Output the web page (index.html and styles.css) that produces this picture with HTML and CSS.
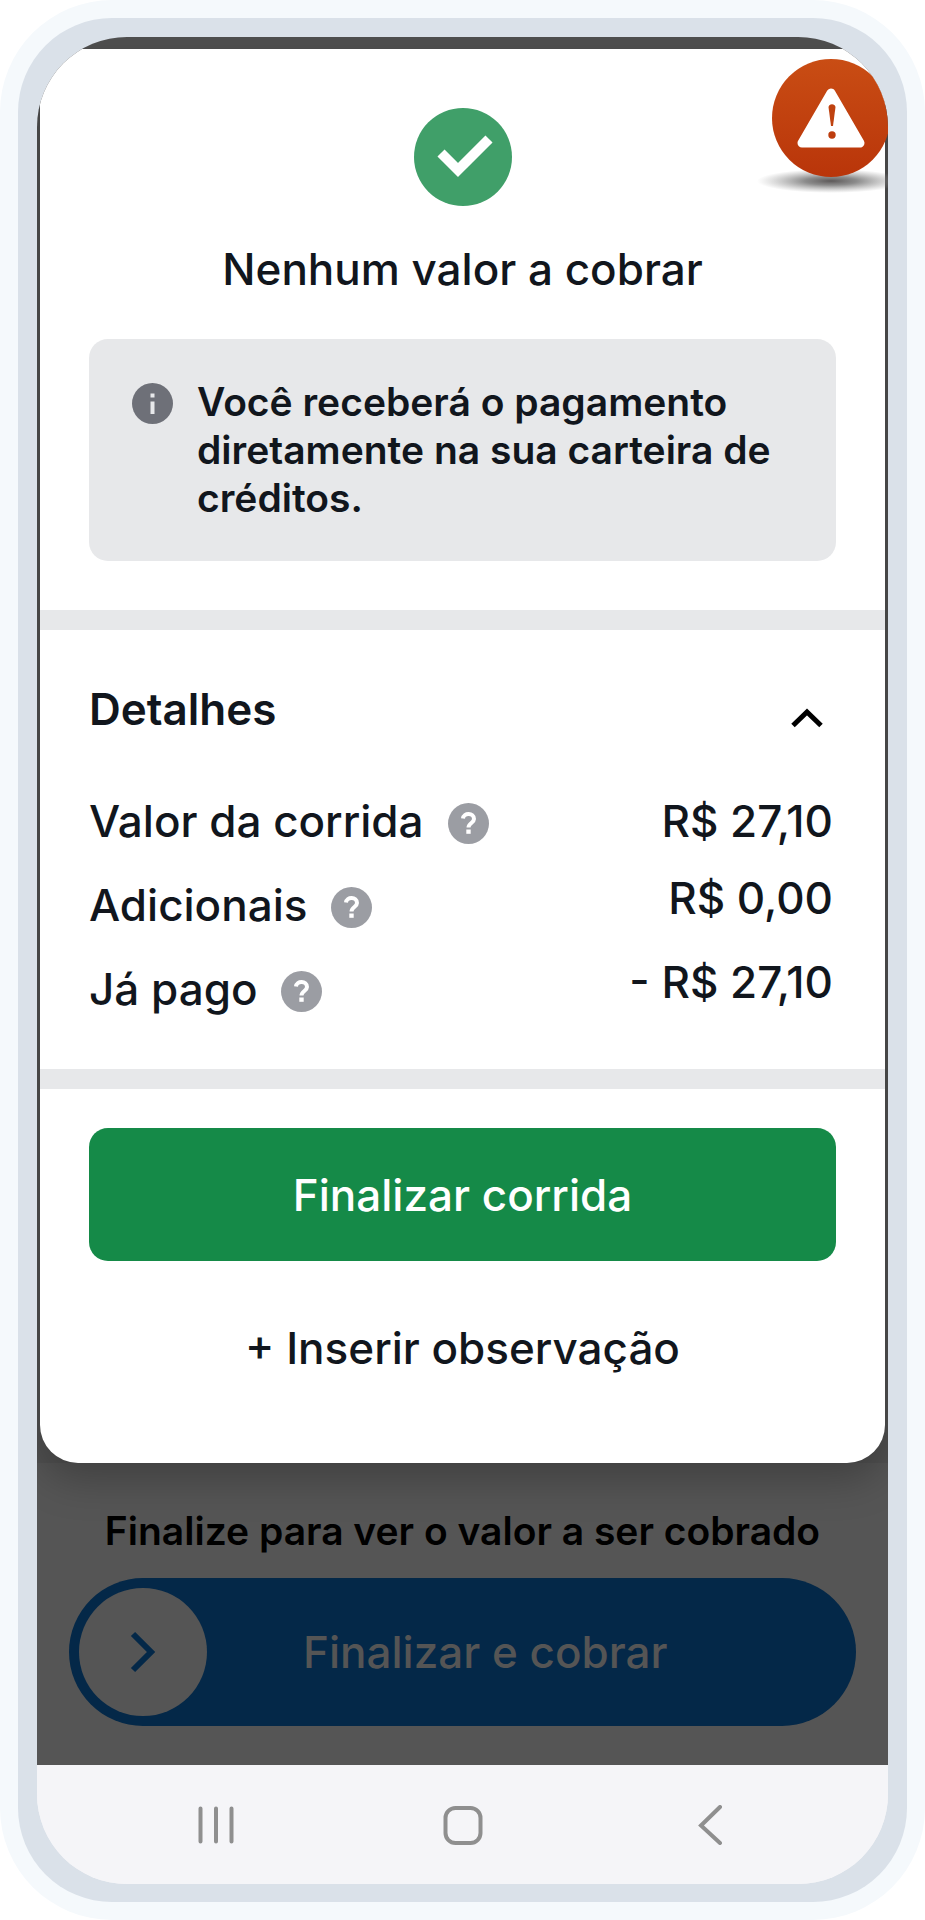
FILE: index.html
```
<!DOCTYPE html>
<html lang="pt-BR">
<head>
    <meta charset="UTF-8">
    <meta name="viewport" content="width=device-width, initial-scale=1">
    <title>Finalizar corrida</title>
    <link rel="stylesheet" href="styles.css">
</head>
<body>
<div class="phone">
    <div class="phone-frame">
        <div class="screen">
            <button class="alert" type="button" aria-label="Alerta">
                <svg viewBox="0 0 150 136" width="150" height="136">
                    <defs>
                        <linearGradient id="alert-fill" x1="0" y1="0" x2="0" y2="1">
                            <stop offset="0" stop-color="#c94d14"/>
                            <stop offset="1" stop-color="#b9350a"/>
                        </linearGradient>
                        <radialGradient id="alert-shadow">
                            <stop offset="0" stop-color="#5c5858"/>
                            <stop offset="0.35" stop-color="#777" stop-opacity="0.85"/>
                            <stop offset="1" stop-color="#999" stop-opacity="0"/>
                        </radialGradient>
                    </defs>
                    <ellipse cx="75" cy="122" rx="74" ry="12" fill="url(#alert-shadow)"/>
                    <circle cx="75" cy="59" r="59" fill="url(#alert-fill)"/>
                    <path d="M75 34 L104 84 H46 Z" fill="#fff" stroke="#fff" stroke-width="9" stroke-linejoin="round"/>
                    <path d="M72.500 48 a3.600 3.600 0 0 1 7 0 L77 67 H75 Z" fill="#bf4210"/>
                    <circle cx="76" cy="76" r="3.700" fill="#bd3d0e"/>
                </svg>
            </button>

            <main class="sheet">
                <section class="summary">
                    <svg class="check" viewBox="0 0 98 98" width="98" height="98">
                        <circle cx="49" cy="49" r="49" fill="#409f69"/>
                        <path d="M27 45 L44 62 L75 31" fill="none" stroke="#fff" stroke-width="10"/>
                    </svg>
                    <h1>Nenhum valor a cobrar</h1>
                    <div class="info">
                        <svg class="info-icon" viewBox="0 0 41 41" width="41" height="41">
                            <circle cx="20.5" cy="20.5" r="20.5" fill="#6e7078"/>
                            <path d="M18.500 10.500h4v4h-4z M18.500 18.500h4v12.500h-4z" fill="#e7e8ea"/>
                        </svg>
                        <p>Você receberá o pagamento diretamente na sua carteira de créditos.</p>
                    </div>
                </section>

                <section class="details">
                    <div class="details-head">
                        <h2>Detalhes</h2>
                        <button class="toggle" type="button" aria-label="Recolher detalhes">
                            <svg viewBox="0 0 32 20" width="32" height="20">
                                <path d="M2 17.500 L16 4 L30 17.500" fill="none" stroke="#000" stroke-width="5"/>
                            </svg>
                        </button>
                    </div>
                    <dl class="values">
                        <div class="row">
                            <dt>Valor da corrida
                                <button class="help" type="button" aria-label="Ajuda: valor da corrida">
                                    <svg viewBox="0 0 41 41" width="41" height="41"><use href="#help-icon"/></svg>
                                </button>
                            </dt>
                            <dd>R$ 27,10</dd>
                        </div>
                        <div class="row">
                            <dt>Adicionais
                                <button class="help" type="button" aria-label="Ajuda: adicionais">
                                    <svg viewBox="0 0 41 41" width="41" height="41"><use href="#help-icon"/></svg>
                                </button>
                            </dt>
                            <dd>R$ 0,00</dd>
                        </div>
                        <div class="row">
                            <dt>Já pago
                                <button class="help" type="button" aria-label="Ajuda: já pago">
                                    <svg viewBox="0 0 41 41" width="41" height="41"><use href="#help-icon"/></svg>
                                </button>
                            </dt>
                            <dd>- R$ 27,10</dd>
                        </div>
                    </dl>
                </section>

                <section class="actions">
                    <button class="btn-finish" type="button">Finalizar corrida</button>
                    <button class="btn-note" type="button">+ Inserir observação</button>
                </section>
            </main>

            <footer class="charge">
                <p>Finalize para ver o valor a ser cobrado</p>
                <button class="slide" type="button">
                    <span class="thumb">
                        <svg viewBox="0 0 26 42" width="26" height="42">
                            <path d="M3 3 L21 21 L3 39" fill="none" stroke="#042848" stroke-width="6"/>
                        </svg>
                    </span>
                    Finalizar e cobrar
                </button>
            </footer>

            <nav class="navbar">
                <button type="button" aria-label="Recentes">
                    <svg viewBox="0 0 40 40" width="40" height="40">
                        <path d="M4.500 3.500v33M20 3.500v33M35.500 3.500v33"/>
                    </svg>
                </button>
                <button type="button" aria-label="Início">
                    <svg viewBox="0 0 40 40" width="40" height="40">
                        <rect x="2.500" y="3" width="35" height="35" rx="10"/>
                    </svg>
                </button>
                <button type="button" aria-label="Voltar">
                    <svg viewBox="0 0 40 40" width="40" height="40">
                        <path d="M30 2 L11 20.500 L30 38"/>
                    </svg>
                </button>
            </nav>
        </div>
    </div>
</div>

<svg class="sprite" width="0" height="0" aria-hidden="true">
    <symbol id="help-icon" viewBox="0 0 41 41">
        <circle cx="20.5" cy="20.5" r="20.5" fill="#9b9da3"/>
        <path d="M15 15.500 C15.500 9.500 26 9.500 26 16 C26 20 20.500 20 20.500 24.500" fill="none" stroke="#fff" stroke-width="4"/>
        <path d="M18.300 26.500h4.400v4.300h-4.400z" fill="#fff"/>
    </symbol>
</svg>
</body>
</html>
```
FILE: styles.css
```
*{
    margin:0;
    padding:0;
    box-sizing: border-box;
}
body{
    background-color: #fff;
    color:#11161d;
    font-family: Inter, "Liberation Sans", sans-serif;
    font-size: 44px;
    font-weight: 500;
    line-height: 52px;
}
button{
    border:none;
    background: none;
    color:inherit;
    font:inherit;
    cursor: pointer;
}
svg{
    display: block;
}

/* phone */
.phone{
    padding:18px;
    border-radius: 112px;
    background-color: #f5f9fc;
}
.phone-frame{
    padding:19px 19px 18px;
    border-radius: 94px;
    background-color: #dae1e9;
}
.screen{
    position: relative;
    overflow: hidden;
    padding-top: 12px;
    border-radius: 90px;
    background: linear-gradient(#505050 90%, #f5f5f8 90%);
}
.alert{
    position: absolute;
    top:22px;
    right:-18px;
    z-index: 2;
}

/* sheet */
.sheet{
    position: relative;
    z-index: 1;
    margin:0 3px;
    border-radius: 0 0 38px 38px;
    background-color: #fff;
    box-shadow: 0 16px 40px rgba(0,0,0,0.25);
}
.summary,.details,.actions{
    padding-left: 49px;
    padding-right: 49px;
}
.summary,.details{
    border-bottom: 20px solid #e7e8ea;
}
.summary{
    display: flex;
    flex-direction: column;
    align-items: center;
    padding-top: 59px;
    padding-bottom: 49px;
}
h1,h2{
    font-size: 44px;
}
h1{
    margin:37px 0 44px;
    font-weight: 500;
}
h2{
    font-weight: 600;
}
.info{
    display: flex;
    align-items: flex-start;
    gap:24px;
    width:100%;
    padding:39px 43px;
    border-radius: 19px;
    background-color: #e7e8ea;
    font-size: 39px;
    font-weight: 600;
    line-height: 48px;
}
.info-icon{
    flex:none;
    margin-top: 5px;
}

/* details */
.details{
    padding-top: 53px;
    padding-bottom: 47px;
}
.details-head,.row{
    display: flex;
    justify-content: space-between;
}
.details-head{
    align-items: center;
    margin-bottom: 53px;
}
.toggle{
    padding:18px 13px 0;
}
.values{
    display: flex;
    flex-direction: column;
    gap:18px;
}
.row dt{
    display: flex;
    align-items: center;
    gap:24px;
    height:66px;
}
.row dd{
    padding-right: 3px;
}
.row:first-child dd{
    align-self: center;
}
.help{
    padding-top: 5px;
}

/* actions */
.actions{
    display: flex;
    flex-direction: column;
    align-items: center;
    gap:61px;
    padding-top: 39px;
    padding-bottom: 89px;
}
.btn-finish{
    width:100%;
    height:133px;
    border-radius: 19px;
    background-color: #158a48;
    color:#fff;
}

/* dimmed footer */
.charge{
    padding:44px 32px 39px;
    background-color: #555;
    color:#000;
}
.charge p{
    margin-bottom: 23px;
    font-size: 39px;
    font-weight: 600;
    line-height: 48px;
    text-align: center;
}
.slide{
    display: flex;
    align-items: center;
    gap:96px;
    width:100%;
    padding:10px;
    border-radius: 74px;
    background-color: #042848;
    color:#555;
}
.thumb{
    display: flex;
    flex:none;
    align-items: center;
    justify-content: center;
    width:128px;
    height:128px;
    border-radius: 50%;
    background-color: #555;
}

.navbar{
    display: flex;
    align-items: center;
    justify-content: space-around;
    height:119px;
    padding:0 55px;
    background-color: #f5f5f8;
}
.navbar svg{
    fill:none;
    stroke:#8f8f8f;
    stroke-width:4;
    stroke-linecap: round;
}
.sprite{
    position: absolute;
}
```
